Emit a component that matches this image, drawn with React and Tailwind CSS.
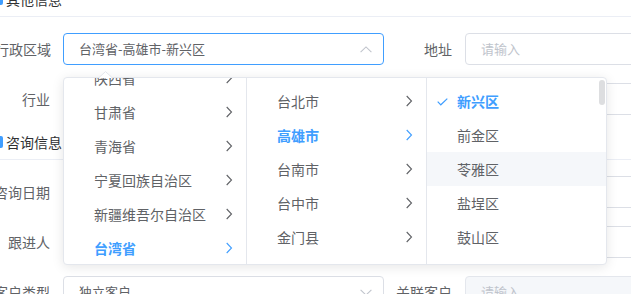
import React from "react";

function ChevronRight({ className }) {
  return (
    <svg width="14" height="14" viewBox="0 0 14 14" className={className}>
      <path d="M4.7 2 L9.5 7 L4.7 12" fill="none" stroke="currentColor" strokeWidth="1.1" />
    </svg>
  );
}

function ChevronV({ up }) {
  return (
    <svg width="12" height="7" viewBox="0 0 12 7" className="text-[#c0c4cc]">
      <path
        d={up ? "M0.6 6.2 L6 0.9 L11.4 6.2" : "M0.6 0.8 L6 6.1 L11.4 0.8"}
        fill="none"
        stroke="currentColor"
        strokeWidth="1.1"
      />
    </svg>
  );
}

function Label({ w, pr, children }) {
  return (
    <div className={`${w} ${pr} shrink-0 flex justify-end whitespace-nowrap text-[14px] text-[#606266]`}>
      <span className="shrink-0">{children}</span>
    </div>
  );
}

function Item({ children, active, arrow = true }) {
  return (
    <div
      className={`relative h-[34px] leading-[34px] pl-[30px] pr-[30px] text-[14px] whitespace-nowrap ${
        active ? "text-[#409eff] font-bold" : "text-[#606266]"
      }`}
    >
      {children}
      {arrow && (
        <ChevronRight
          className={`absolute right-[10px] top-[10px] ${active ? "text-[#409eff]" : "text-[#606266]"}`}
        />
      )}
    </div>
  );
}

function Leaf({ children, active, hover }) {
  return (
    <div
      className={`relative h-[34px] leading-[34px] pl-[30px] pr-[30px] text-[14px] whitespace-nowrap ${
        active ? "text-[#409eff] font-bold" : "text-[#606266]"
      } ${hover ? "bg-[#f5f7fa]" : ""}`}
    >
      {active && (
        <svg width="11" height="8" viewBox="0 0 11 8" className="absolute left-[10px] top-[14px] text-[#409eff]">
          <path d="M0.7 3.6 L3.8 6.8 L10.3 0.6" fill="none" stroke="currentColor" strokeWidth="1.2" />
        </svg>
      )}
      {children}
    </div>
  );
}

export default function App() {
  return (
    <div className="relative w-[631px] h-[294px] overflow-hidden bg-white font-['Noto_Sans_CJK_SC','Noto_Sans',sans-serif]">
      {/* Section: 其他信息 */}
      <div className="mt-[-18px] h-[35px] border-b border-[#ebeef5] flex items-center">
        <div className="w-[3px] h-[12px] bg-[#409eff] rounded-r-[2px]" />
        <span className="ml-[3px] text-[14px] text-[#303133]">其他信息</span>
      </div>

      {/* Row 1 */}
      <div className="flex items-center h-[32px] mt-[16px]">
        <Label w="w-[63px]" pr="pr-[12px]">行政区域</Label>
        <div className="w-[321px] h-[32px] shrink-0 rounded-[4px] border border-[#409eff] flex items-center justify-between pl-[15px] pr-[11px]">
          <span className="text-[13px] text-[#606266] whitespace-nowrap">台湾省-高雄市-新兴区</span>
          <ChevronV up />
        </div>
        <Label w="w-[81px]" pr="pr-[13px]">地址</Label>
        <div className="w-[220px] h-[32px] shrink-0 rounded-[4px] border border-[#dcdfe6] flex items-center pl-[15px]">
          <span className="text-[13px] text-[#c0c4cc]">请输入</span>
        </div>
      </div>

      {/* Row 2 */}
      <div className="flex items-center h-[32px] mt-[18px]">
        <Label w="w-[63px]" pr="pr-[13px]">行业</Label>
        <div className="w-[321px] h-[32px] shrink-0 rounded-[4px] border border-[#dcdfe6]" />
        <Label w="w-[81px]" pr="pr-[13px]">类型</Label>
        <div className="w-[220px] h-[32px] shrink-0 rounded-[4px] border border-[#dcdfe6]" />
      </div>

      {/* Section: 咨询信息 */}
      <div className="mt-[10px] h-[35px] border-b border-[#ebeef5] flex items-center">
        <div className="w-[3px] h-[12px] bg-[#409eff] rounded-r-[2px]" />
        <span className="ml-[3px] text-[14px] text-[#303133]">咨询信息</span>
      </div>

      {/* Row 3 */}
      <div className="flex items-center h-[32px] mt-[16px]">
        <Label w="w-[63px]" pr="pr-[13px]">咨询日期</Label>
        <div className="w-[321px] h-[32px] shrink-0 rounded-[4px] border border-[#dcdfe6]" />
        <Label w="w-[81px]" pr="pr-[13px]">咨询方式</Label>
        <div className="w-[220px] h-[32px] shrink-0 rounded-[4px] border border-[#dcdfe6]" />
      </div>

      {/* Row 4 */}
      <div className="flex items-center h-[32px] mt-[18px]">
        <Label w="w-[63px]" pr="pr-[13px]">跟进人</Label>
        <div className="w-[321px] h-[32px] shrink-0 rounded-[4px] border border-[#dcdfe6]" />
        <Label w="w-[81px]" pr="pr-[13px]">来源</Label>
        <div className="w-[220px] h-[32px] shrink-0 rounded-[4px] border border-[#dcdfe6]" />
      </div>

      {/* Row 5 */}
      <div className="flex items-center h-[32px] mt-[18px]">
        <Label w="w-[63px]" pr="pr-[13px]">客户类型</Label>
        <div className="w-[321px] h-[32px] shrink-0 rounded-[4px] border border-[#dcdfe6] flex items-center justify-between pl-[15px] pr-[11px]">
          <span className="text-[13px] text-[#606266] whitespace-nowrap">独立客户</span>
          <ChevronV />
        </div>
        <Label w="w-[81px]" pr="pr-[13px]">关联客户</Label>
        <div className="w-[220px] h-[32px] shrink-0 rounded-[4px] border border-[#e4e7ed] bg-[#f5f7fa] flex items-center pl-[15px]">
          <span className="text-[13px] text-[#c0c4cc]">请输入</span>
        </div>
      </div>

      {/* Cascader dropdown panel */}
      <div className="absolute left-[63px] top-[77px] w-[544px] h-[188px] bg-white border border-[#e4e7ed] rounded-[4px] shadow-[0_2px_12px_0_rgba(0,0,0,0.1)] flex overflow-hidden">
        <div className="w-[183px] shrink-0 border-r border-[#e4e7ed] overflow-hidden">
          <div className="mt-[-17px]">
            <Item>陕西省</Item>
            <Item>甘肃省</Item>
            <Item>青海省</Item>
            <Item>宁夏回族自治区</Item>
            <Item>新疆维吾尔自治区</Item>
            <Item active>台湾省</Item>
            <Item>香港特别行政区</Item>
          </div>
        </div>
        <div className="w-[180px] shrink-0 border-r border-[#e4e7ed] pt-[6px]">
          <Item>台北市</Item>
          <Item active>高雄市</Item>
          <Item>台南市</Item>
          <Item>台中市</Item>
          <Item>金门县</Item>
        </div>
        <div className="relative flex-1 pt-[6px]">
          <Leaf active>新兴区</Leaf>
          <Leaf>前金区</Leaf>
          <Leaf hover>苓雅区</Leaf>
          <Leaf>盐埕区</Leaf>
          <Leaf>鼓山区</Leaf>
          <div className="absolute right-[1px] top-[2px] w-[6px] h-[25px] rounded-[3px] bg-[rgba(144,147,153,0.3)]" />
        </div>
      </div>

      {/* Popper arrow */}
      <svg width="13" height="7" viewBox="0 0 13 7" className="absolute left-[99px] top-[71px]">
        <polygon points="0,7 6.5,0.6 13,7" fill="white" />
        <polyline points="0,6.5 6.5,0.6 13,6.5" fill="none" stroke="#e4e7ed" strokeWidth="1" />
      </svg>
    </div>
  );
}
